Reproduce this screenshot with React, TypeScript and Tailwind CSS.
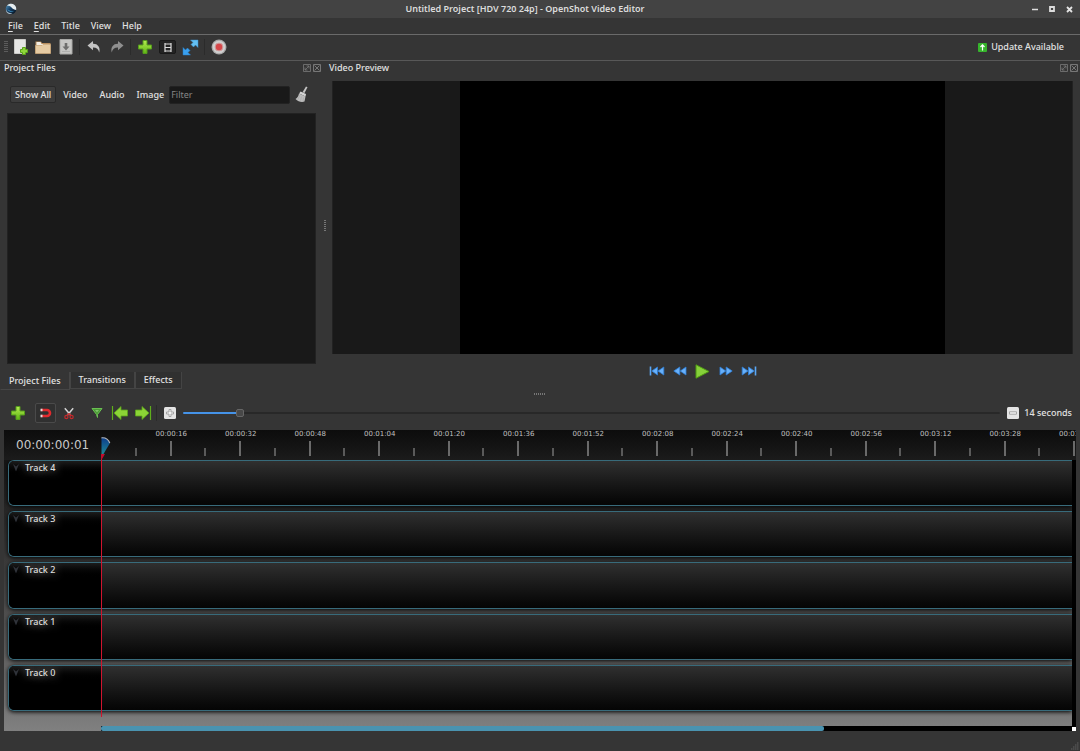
import React, { useState } from "react";

type IconButtonProps = {
  label: string;
  className?: string;
  children: React.ReactNode;
};

function IconButton({ label, className = "w-[23px] h-5", children }: IconButtonProps) {
  return (
    <button type="button" aria-label={label} title={label} className={`flex shrink-0 items-center justify-center ${className}`}>
      {children}
    </button>
  );
}

function Separator() {
  return (
    <span className="flex h-4 w-[5px] shrink-0 justify-center">
      <span className="w-px bg-[#2b2b2b]" />
    </span>
  );
}

function AppLogo() {
  return (
    <svg width="12" height="12" viewBox="0 0 12 12" aria-hidden="true">
      <defs>
        <linearGradient id="logo" x1="0" y1="0" x2="1" y2="1">
          <stop offset="0" stopColor="#5fa2c8" />
          <stop offset="0.45" stopColor="#174066" />
          <stop offset="1" stopColor="#050d16" />
        </linearGradient>
      </defs>
      <circle cx="6" cy="6" r="5.300" fill="url(#logo)" />
      <path d="M2 2.500C4 .5 7.500 .3 9.500 2C11 3.300 11.500 5 11.200 7C9.500 6.800 8 6.200 6.800 4.800C5.500 3.300 4 2.500 2 2.500Z" fill="#e6ecef" />
      <path d="M1 6C1.500 9 4 10.400 7.500 10.300C5 12 .5 10.500 1 6Z" fill="#a9b8c2" />
      <path d="M2.500 6.500C3.500 8.500 6 9.300 9 8.600C6.500 8.300 4.500 7.800 2.500 6.500Z" fill="#3f9bd0" />
    </svg>
  );
}

function Plus() {
  return (
    <svg width="14" height="14" viewBox="0 0 14 14" aria-hidden="true">
      <defs>
        <linearGradient id="green" x1="0" y1="0" x2="0" y2="1">
          <stop offset="0" stopColor="#b4ec51" />
          <stop offset="1" stopColor="#5fb414" />
        </linearGradient>
      </defs>
      <path d="M5 .5H9V5H13.500V9H9V13.500H5V9H.5V5H5Z" fill="url(#green)" stroke="#559c1c" strokeWidth="1" />
    </svg>
  );
}

function NewFile() {
  return (
    <svg width="16" height="16" viewBox="0 0 16 16" aria-hidden="true">
      <path d="M2.500 .5H13.500V14.500H2.500Z" fill="#e6e6e4" stroke="#c9c9c6" />
      <path d="M10.500 8.500H13.500V10.500H15.500V13.500H13.500V15.500H10.500V13.500H8.500V10.500H10.500Z" fill="#8fd63a" stroke="#5ba31a" />
    </svg>
  );
}

function Folder() {
  return (
    <svg width="16" height="14" viewBox="0 0 16 14" aria-hidden="true">
      <path d="M.5 13V1.500H6L7 3H15.500V13Z" fill="#b98e5d" />
      <path d="M1.500 2H5.500L6.500 4H14.500V7H1.500Z" fill="#f3ede4" />
      <path d="M.5 5.500H7L8 4.500H15.500V13.500H.5Z" fill="#e6cba3" stroke="#c9a678" strokeWidth=".8" />
    </svg>
  );
}

function Save() {
  return (
    <svg width="14" height="16" viewBox="0 0 14 16" aria-hidden="true">
      <path d="M1 .5H13V15H1Z" fill="#c6c6c4" stroke="#a9a9a7" />
      <path d="M5.700 4H8.300V7.500H10.500L7 11.500L3.500 7.500H5.700Z" fill="#6e6e6d" />
      <path d="M3 12.500H11" stroke="#b0b0ae" />
    </svg>
  );
}

function Undo({ dim = false }: { dim?: boolean }) {
  return (
    <svg width="14" height="14" viewBox="0 0 14 14" className={dim ? "-scale-x-100" : ""} aria-hidden="true">
      <path d="M.5 5.500L6 1V3.700C10.500 3.500 13.800 7 12.200 12.500C11.500 9.200 9.500 7.500 6 7.600V10.200Z" fill={dim ? "#8f8f8f" : "#c4c4c4"} />
    </svg>
  );
}

function Film() {
  return (
    <svg width="8" height="9" viewBox="0 0 8 9" aria-hidden="true">
      <path d="M1 0V9M7 0V9" stroke="#dcdcdc" strokeWidth="1.200" />
      <path d="M1 1H7M1 4.500H7M1 8H7" fill="none" stroke="#dcdcdc" />
    </svg>
  );
}

function Expand() {
  return (
    <svg width="17" height="17" viewBox="0 0 17 17" aria-hidden="true">
      <path d="M8.500 1H16V8.500L13.500 6L11.500 8L9 5.500L11 3.500Z" fill="#63bff2" stroke="#3a8ec8" strokeWidth=".5" />
      <path d="M1 8.500L3.500 11L5.500 9L8 11.500L6 13.500L8.500 16H1Z" fill="#3aa0ef" stroke="#287ec4" strokeWidth=".5" />
    </svg>
  );
}

function Record() {
  return (
    <svg width="16" height="16" viewBox="0 0 16 16" aria-hidden="true">
      <circle cx="8" cy="8" r="7.500" fill="#a8a8a8" />
      <circle cx="8" cy="8" r="6.300" fill="#cfcfcf" />
      <circle cx="8" cy="8" r="3.900" fill="#d64649" stroke="#cfa0a0" strokeWidth="1" />
    </svg>
  );
}

function Broom() {
  return (
    <svg width="13" height="17" viewBox="0 0 13 17" aria-hidden="true">
      <path d="M11 .5L12.500 1.200L9.500 7L7.500 6.300Z" fill="#c4c4c4" />
      <path d="M5.500 5.500L11 8L10.500 10.500L4.200 7.500Z" fill="#d4d4d4" />
      <path d="M4 7.500L10.500 10.500L9.500 15.500C6.500 16.500 3 15.500 .5 13C2.500 12 3.500 10 4 7.500Z" fill="#bcbcbc" />
      <path d="M4.500 9.500L3 13.500M6.500 10.500L5.500 14.800M8.500 11.500L8 15" stroke="#a2a2a2" strokeWidth=".5" />
    </svg>
  );
}

function DockButtons() {
  return (
    <div className="flex gap-[2px]">
      <button type="button" aria-label="Float panel">
        <svg width="8" height="8" viewBox="0 0 8 8" aria-hidden="true">
          <path d="M.5 .5H7.500V7.500H.5ZM2 6L6 2M3.500 2H6V4.500M2 3.500V6H4.500" fill="none" stroke="#7a7a7a" strokeWidth=".8" />
        </svg>
      </button>
      <button type="button" aria-label="Close panel">
        <svg width="8" height="8" viewBox="0 0 8 8" aria-hidden="true">
          <path d="M.5 .5H7.500V7.500H.5ZM1.500 1.500L6.500 6.500M6.500 1.500L1.500 6.500" fill="none" stroke="#7e7e7e" strokeWidth=".9" />
        </svg>
      </button>
    </div>
  );
}

function Seek({ bar = false, flip = false }: { bar?: boolean; flip?: boolean }) {
  return (
    <svg width="16" height="10" viewBox="0 0 16 10" className={flip ? "-scale-x-100" : ""} aria-hidden="true">
      {bar && <path d="M1.500 .5V9.500" stroke="#5aa7f5" strokeWidth="1.600" />}
      <path
        d={bar ? "M8.500 1L2.800 5L8.500 9ZM14.800 1L9 5L14.800 9Z" : "M7.800 1L1.800 5L7.800 9ZM14 1L8.200 5L14 9Z"}
        fill="#67b0fa"
        stroke="#2f7fd8"
        strokeWidth=".8"
      />
    </svg>
  );
}

function Play() {
  return (
    <svg width="15" height="15" viewBox="0 0 15 15" aria-hidden="true">
      <path d="M1 .8L14 7.500L1 14.200Z" fill="#86d13a" stroke="#4e9a12" />
    </svg>
  );
}

function Magnet() {
  return (
    <svg width="12" height="10" viewBox="0 0 12 10" aria-hidden="true">
      <path d="M1 2H7A3 3 0 0 1 7 8H1" fill="none" stroke="#e22a2e" strokeWidth="2.600" />
      <path d="M.5 .7H2.500V3.300H.5ZM.5 6.700H2.500V9.300H.5Z" fill="#e8d8d8" />
    </svg>
  );
}

function Scissors() {
  return (
    <svg width="10" height="13" viewBox="0 0 10 13" aria-hidden="true">
      <path d="M.8 1.200L6.500 8M9.200 1.200L3.500 8" stroke="#d4d4d4" strokeWidth="1.500" />
      <path d="M5 6.500L7 8.500M5 6.500L3 8.500" stroke="#c22a2c" strokeWidth="1.300" />
      <circle cx="2.400" cy="10" r="1.600" fill="none" stroke="#c22a2c" strokeWidth="1.200" />
      <circle cx="7.600" cy="10" r="1.600" fill="none" stroke="#c22a2c" strokeWidth="1.200" />
    </svg>
  );
}

function Marker() {
  return (
    <svg width="12" height="12" viewBox="0 0 12 12" aria-hidden="true">
      <path d="M1 1.500H11L6.500 7.500V10.500L5.500 7.500Z" fill="#4a9a35" stroke="#6abf52" />
      <path d="M4 3H8L6 5.500Z" fill="#7fc269" />
    </svg>
  );
}

function JumpArrow({ flip = false }: { flip?: boolean }) {
  return (
    <svg width="18" height="16" viewBox="0 0 18 16" className={flip ? "-scale-x-100" : ""} aria-hidden="true">
      <path d="M1.500 1V15" stroke="#5fae1c" strokeWidth="1.200" />
      <path d="M3 8L10 1.500V5H16.500V11H10V14.500Z" fill="#8cd436" stroke="#5ba31a" strokeWidth=".8" />
    </svg>
  );
}

function ZoomBox({ plus = false }: { plus?: boolean }) {
  return (
    <svg width="12" height="12" viewBox="0 0 12 12" aria-hidden="true">
      <rect x="0" y="0" width="12" height="12" rx="1.500" fill="#e4e4e4" />
      <path
        d={plus ? "M5 2.500H7V5H9.500V7H7V9.500H5V7H2.500V5H5Z" : "M2.500 4.800H9.500V7.200H2.500Z"}
        fill="#f3f3f3"
        stroke="#9d9d9d"
        strokeWidth=".9"
      />
    </svg>
  );
}

function TitleBar() {
  return (
    <header className="flex h-[18px] shrink-0 items-center justify-between bg-[#434343] pr-1 pl-[5px]">
      <AppLogo />
      <h1 className="pl-1 text-[9px] leading-4 font-semibold text-[#dcdcdc]">Untitled Project [HDV 720 24p] - OpenShot Video Editor</h1>
      <div className="flex justify-end gap-1">
        <IconButton label="Minimize" className="h-4 w-[13px]">
          <svg width="6" height="8" viewBox="0 0 6 8" aria-hidden="true"><path d="M0 4.500H6" stroke="#ddd" strokeWidth="1.500" /></svg>
        </IconButton>
        <IconButton label="Maximize" className="h-4 w-[13px]">
          <svg width="6" height="6" viewBox="0 0 6 6" aria-hidden="true"><path d="M1 1H5V5H1Z" fill="none" stroke="#ddd" strokeWidth="1.800" /></svg>
        </IconButton>
        <IconButton label="Close" className="h-4 w-[13px]">
          <svg width="7" height="7" viewBox="0 0 7 7" aria-hidden="true"><path d="M1 1L6 6M6 1L1 6" stroke="#e4e4e4" strokeWidth="1.800" /></svg>
        </IconButton>
      </div>
    </header>
  );
}

const menus = ["File", "Edit", "Title", "View", "Help"];

function MenuBar() {
  return (
    <nav aria-label="Main menu" className="flex h-[17px] shrink-0 items-center gap-[11px] border-b border-[#6a6a6a] px-2">
      {menus.map((m, i) => (
        <button key={m} type="button" className="leading-4">
          {i < 2 ? <><span className="underline underline-offset-2">{m[0]}</span>{m.slice(1)}</> : m}
        </button>
      ))}
    </nav>
  );
}

function MainToolbar() {
  return (
    <div role="toolbar" aria-label="Main toolbar" className="flex h-[26px] shrink-0 items-center border-b border-[#585858] pb-px pl-1">
      <span className="h-3 w-1 bg-[repeating-linear-gradient(to_bottom,#5c5c5c_0_1px,transparent_1px_2px)]" />
      <IconButton label="New project"><NewFile /></IconButton>
      <IconButton label="Open project"><Folder /></IconButton>
      <IconButton label="Save project"><Save /></IconButton>
      <Separator />
      <IconButton label="Undo"><Undo /></IconButton>
      <IconButton label="Redo"><Undo dim /></IconButton>
      <Separator />
      <IconButton label="Import files"><Plus /></IconButton>
      <IconButton label="Choose profile">
        <span className="flex h-[14px] w-[17px] items-center justify-center rounded-xs border border-[#191919] bg-[#232323]"><Film /></span>
      </IconButton>
      <IconButton label="Full screen"><Expand /></IconButton>
      <Separator />
      <IconButton label="Export video"><Record /></IconButton>
      <button type="button" className="mr-4 ml-auto flex items-center gap-1">
        <svg width="9" height="9" viewBox="0 0 9 9" aria-hidden="true">
          <rect width="9" height="9" rx="1" fill="#36b52c" />
          <path d="M4.500 7.500V2M2.500 4L4.500 1.800L6.500 4" fill="none" stroke="#fff" strokeWidth="1.200" />
        </svg>
        Update Available
      </button>
    </div>
  );
}

const filters = ["Show All", "Video", "Audio", "Image"];
const tabs = ["Project Files", "Transitions", "Effects"];

function ProjectFiles() {
  const [filter, setFilter] = useState("Show All");
  return (
    <section aria-label="Project Files" className="flex w-[30%] shrink-0 flex-col pr-[3px]">
      <div className="flex h-[14px] shrink-0 items-center justify-between pl-1">
        <h2>Project Files</h2>
        <DockButtons />
      </div>
      <div className="mt-[10px] flex h-[19px] shrink-0 items-center pr-[13px] pl-[10px]">
        <div className="flex items-center gap-[2px]">
          {filters.map((f) => (
            <button
              key={f}
              type="button"
              aria-pressed={filter === f}
              onClick={() => setFilter(f)}
              className={`h-[17px] rounded-xs border px-1 leading-[15px] whitespace-nowrap ${filter === f ? "border-[#292929] bg-[#3d3d3d]" : "border-transparent"}`}
            >
              {f}
            </button>
          ))}
        </div>
        <input aria-label="Filter" placeholder="Filter" className="h-[18px] min-w-0 flex-1 rounded-xs border border-[#222] bg-[#191919] px-px font-normal text-[#ddd] placeholder:text-[#858585]" />
        <IconButton label="Clear filter" className="ml-[5px] h-[18px] w-[13px]"><Broom /></IconButton>
      </div>
      <div className="mt-[9px] mr-[5px] ml-[7px] min-h-0 flex-1 border border-[#222] bg-[#191919]" />
      <div role="tablist" className="mt-2 flex h-[18px] shrink-0 items-start">
        {tabs.map((t, i) => (
          <button
            key={t}
            role="tab"
            type="button"
            aria-selected={i === 0}
            className={`border border-t-0 px-2 whitespace-nowrap ${i === 0 ? "h-[18px] border-[#464646] border-l-transparent pt-px leading-4" : "h-[17px] border-[#444] bg-[#303030] leading-4"}`}
          >
            {t}
          </button>
        ))}
      </div>
    </section>
  );
}

function VideoPreview() {
  return (
    <section aria-label="Video Preview" className="flex min-w-0 flex-1 flex-col">
      <div className="flex h-[14px] shrink-0 items-center justify-between pr-[2px] pl-[2px]">
        <h2>Video Preview</h2>
        <DockButtons />
      </div>
      <div className="mt-[6px] mr-[7px] ml-[5px] flex min-h-0 flex-1 justify-center border border-[#222] border-y-0 bg-[#191919]">
        <div className="aspect-video h-full bg-black" />
      </div>
      <div className="mr-[7px] mb-[2px] ml-[5px] flex h-[34px] shrink-0 items-center justify-center gap-[7px]">
        <IconButton label="Jump to start" className="h-4 w-4"><Seek bar /></IconButton>
        <IconButton label="Rewind" className="h-4 w-4"><Seek /></IconButton>
        <IconButton label="Play" className="h-4 w-4"><Play /></IconButton>
        <IconButton label="Fast forward" className="h-4 w-4"><Seek flip /></IconButton>
        <IconButton label="Jump to end" className="h-4 w-4"><Seek bar flip /></IconButton>
      </div>
    </section>
  );
}

function TimelineToolbar() {
  const [zoom, setZoom] = useState(66);
  return (
    <div role="toolbar" aria-label="Timeline toolbar" className="mt-1 flex h-[22px] shrink-0 items-center pr-2 pl-[6px]">
      <IconButton label="Add track" className="h-5 w-[23px]"><Plus /></IconButton>
      <IconButton label="Snapping" className="ml-[6px] h-5 w-[21px] rounded-xs border border-[#4a4a4a] bg-[#303030]"><Magnet /></IconButton>
      <IconButton label="Razor" className="h-5 w-[25px]"><Scissors /></IconButton>
      <span className="w-1 shrink-0" />
      <IconButton label="Add marker" className="h-5 w-[23px]"><Marker /></IconButton>
      <IconButton label="Previous marker"><JumpArrow /></IconButton>
      <IconButton label="Next marker"><JumpArrow flip /></IconButton>
      <Separator />
      <IconButton label="Zoom in" className="ml-[5px] h-5 w-3"><ZoomBox plus /></IconButton>
      <input
        type="range"
        aria-label="Timeline zoom"
        min={0}
        max={1000}
        value={zoom}
        onChange={(e) => setZoom(Number(e.target.value))}
        style={{ backgroundImage: `linear-gradient(to right, #4593e8 ${zoom / 10}%, #282828 ${zoom / 10}%)` }}
        className="mx-[7px] h-[2px] min-w-0 flex-1 appearance-none rounded-full [&::-webkit-slider-thumb]:h-2 [&::-webkit-slider-thumb]:w-2 [&::-webkit-slider-thumb]:appearance-none [&::-webkit-slider-thumb]:rounded-xs [&::-webkit-slider-thumb]:border [&::-webkit-slider-thumb]:border-[#666] [&::-webkit-slider-thumb]:bg-[#484848]"
      />
      <IconButton label="Zoom out" className="h-5 w-3"><ZoomBox /></IconButton>
      <span className="ml-[5px] whitespace-nowrap">14 seconds</span>
    </div>
  );
}

const marks = ["00:00:16", "00:00:32", "00:00:48", "00:01:04", "00:01:20", "00:01:36", "00:01:52", "00:02:08", "00:02:24", "00:02:40", "00:02:56", "00:03:12", "00:03:28", "00:03:44"];
const tracks = ["Track 4", "Track 3", "Track 2", "Track 1", "Track 0"];

function Ruler() {
  return (
    <div className="flex h-[30px] shrink-0 overflow-hidden bg-gradient-to-b from-[#0c0c0c] to-[#1b1b1b]">
      <div className="flex w-[98px] shrink-0 items-center pl-3 font-['DejaVu_Sans',sans-serif] text-[12px] font-normal text-[#c8c8c8]">00:00:00:01</div>
      <div className="mr-px grid min-w-0 flex-1 grid-cols-14 font-['DejaVu_Sans',sans-serif] text-[7px] leading-[8px] font-normal text-[#c0c0c0]">
        {marks.map((m) => (
          <div key={m} className="flex h-[26px] items-end">
            <span className="h-2 w-1/2 border-r-2 border-[#5a5a5a]" />
            <span className="flex h-full w-1/2 flex-col items-end justify-between">
              <span className="w-8 translate-x-1/2">{m}</span>
              <span className="h-[15px] w-[2px] bg-[#6a6a6a]" />
            </span>
          </div>
        ))}
      </div>
    </div>
  );
}

function Track({ name }: { name: string }) {
  return (
    <div className="flex min-h-0 flex-1 overflow-hidden rounded-l-md border border-r-0 border-[#386b7b] bg-black shadow-[0_1px_4px_#000]">
      <div className="flex w-[93px] shrink-0 items-start gap-[6px] bg-gradient-to-b from-[#1c1c1c] to-black to-35% pl-1">
        <button type="button" aria-label={`${name} menu`} className="mt-[3px]">
          <svg width="6" height="8" viewBox="0 0 6 8" aria-hidden="true"><path d="M0 0L3 7.500L6 0L3 2.500Z" fill="#30333a" /></svg>
        </button>
        <span className="leading-[13px] text-[#ddd] [text-shadow:0_0_8px_#ccc]">{name}</span>
      </div>
      <div className="flex-1 bg-gradient-to-b from-[#303030] to-[#050505]" />
    </div>
  );
}

function Timeline() {
  return (
    <section aria-label="Timeline" className="relative mr-1 ml-1 mt-[6px] flex h-[301px] shrink-0 flex-col">
      <Ruler />
      <div className="flex min-h-0 flex-1">
        <div className="flex min-w-0 flex-1 flex-col bg-gradient-to-b from-[#151515] to-[#808080]">
          <div className="flex min-h-0 flex-1 flex-col gap-[5px] overflow-hidden pb-[15px] pl-1">
            {tracks.map((t) => <Track key={t} name={t} />)}
          </div>
          <div className="ml-[97px] h-[5px] shrink-0 bg-black">
            <div className="h-full w-[74.500%] rounded-xs bg-[#4a93b0]" />
          </div>
        </div>
        <div className="flex w-1 shrink-0 flex-col justify-end bg-black">
          <span className="h-1 w-1 bg-white" />
        </div>
      </div>
      <div className="pointer-events-none absolute top-[7px] left-[97px] z-10 flex h-[280px] flex-col">
        <svg width="10" height="22" viewBox="0 0 10 22" aria-hidden="true">
          <defs>
            <linearGradient id="head" x1="0" y1="0" x2="0" y2="1">
              <stop offset="0" stopColor="#0c3c8c" />
              <stop offset="1" stopColor="#1f8795" />
            </linearGradient>
          </defs>
          <path d="M.5 .5C4 0 7.500 2 9 6L2.500 17H.5Z" fill="url(#head)" />
          <path d="M.5 .8C4 .5 7.500 2.500 8.800 6" fill="none" stroke="#b5b5b5" strokeWidth="1.200" />
          <path d="M0 17H4L1 22H0Z" fill="#c00d2c" />
        </svg>
        <span className="w-px flex-1 bg-[#d0142f]" />
      </div>
    </section>
  );
}

export default function App() {
  return (
    <div className="flex h-screen flex-col overflow-hidden bg-[#353535] font-['Noto_Sans',sans-serif] text-[9px] leading-[14px] font-medium text-[#e2e2e2]">
      <TitleBar />
      <MenuBar />
      <MainToolbar />
      <main className="flex min-h-0 flex-1 flex-col">
        <div className="flex min-h-0 flex-1">
          <ProjectFiles />
          <div role="separator" aria-label="Resize panels" className="flex w-[3px] shrink-0 items-center">
            <span className="h-3 w-[2px] bg-[repeating-linear-gradient(to_bottom,#777_0_1px,transparent_1px_2px)]" />
          </div>
          <VideoPreview />
        </div>
        <div role="separator" aria-label="Resize timeline" className="flex h-2 shrink-0 items-center justify-center">
          <span className="h-[2px] w-3 bg-[repeating-linear-gradient(to_right,#777_0_1px,transparent_1px_2px)]" />
        </div>
        <TimelineToolbar />
        <Timeline />
      </main>
      <footer className="flex h-5 shrink-0 items-end justify-end p-px">
        <svg width="8" height="8" viewBox="0 0 8 8" aria-hidden="true"><path d="M0 7H8M2 5H8M4 3H8M6 1H8" stroke="#606060" strokeDasharray="1.500 .5" /></svg>
      </footer>
    </div>
  );
}
